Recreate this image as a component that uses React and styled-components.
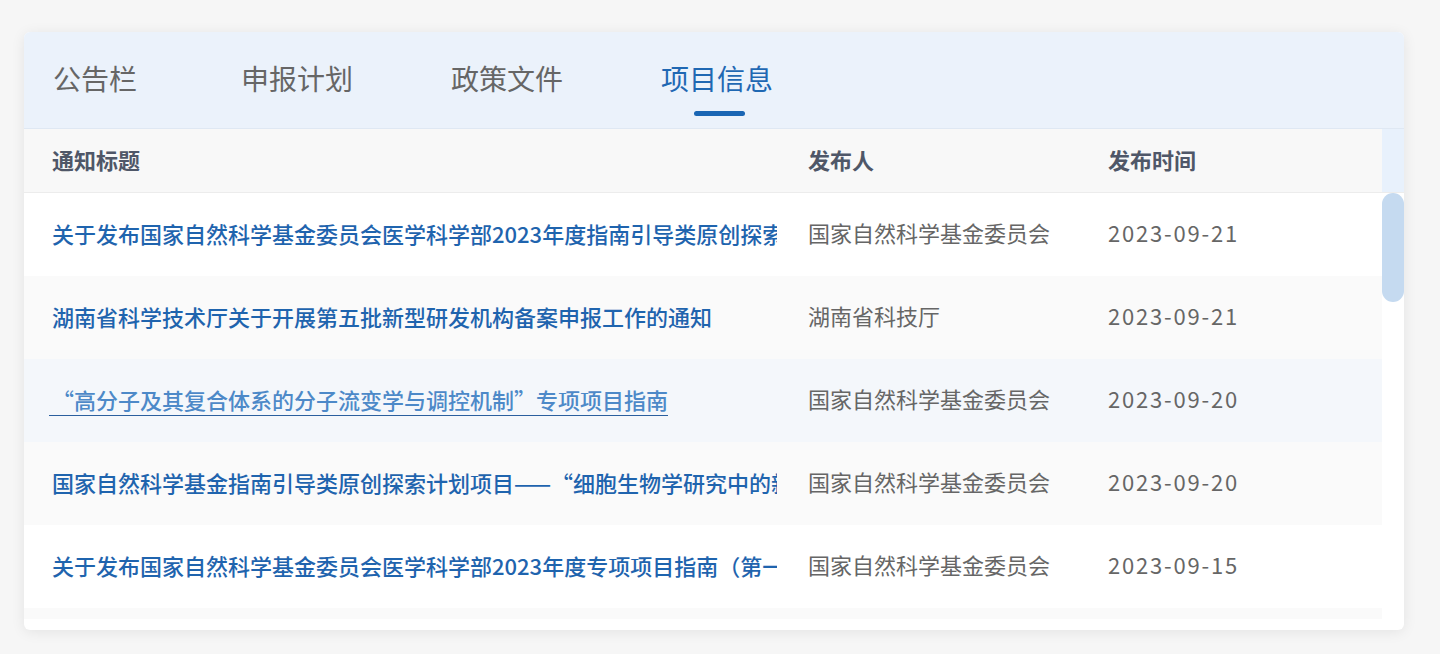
import React from "react";
import styled, { createGlobalStyle, css } from "styled-components";

const Global = createGlobalStyle`
  html, body { margin: 0; padding: 0; }
  body {
    background: #f6f6f6;
    font-family: "Noto Sans CJK SC", "Noto Sans", sans-serif;
  }
  * { box-sizing: border-box; }
`;

const Page = styled.div`
  padding: 32px 36px 24px 24px;
`;

const Card = styled.section`
  width: 1380px;
  background: #ffffff;
  border-radius: 6px;
  overflow: hidden;
  box-shadow: 0 2px 14px rgba(0, 0, 0, 0.08);
  padding-bottom: 11px;
`;

const TabBar = styled.nav`
  height: 97px;
  background: #ebf2fb;
  border-bottom: 1px solid #dfe8f3;
  display: flex;
  align-items: flex-start;
  gap: 98px;
  padding-left: 29px;
`;

const Tab = styled.div`
  display: flex;
  flex-direction: column;
  align-items: center;
  padding-top: 26px;
  font-size: 28px;
  line-height: 40px;
  color: ${(p) => (p.$active ? "#1f68b3" : "#666666")};
  cursor: pointer;
  &:first-child { margin-right: 6px; }
`;

const TabLine = styled.span`
  margin: 13px 0 0 5px;
  width: 51px;
  height: 5px;
  border-radius: 3px;
  background: ${(p) => (p.$active ? "#1a66b4" : "transparent")};
`;

const HeadRow = styled.div`
  display: grid;
  grid-template-columns: 756px 300px 302px 22px;
  height: 64px;
  background: #f8f8f8;
  border-bottom: 1px solid #ececec;
`;

const HeadCell = styled.div`
  display: flex;
  align-items: center;
  padding: 0 0 3px 28px;
  font-size: 22px;
  font-weight: 600;
  color: #4f5768;
`;

const Gutter = styled.div`
  background: #e8f1fc;
`;

const Body = styled.div`
  height: 426px;
  display: flex;
`;

const Rows = styled.div`
  flex: 1;
  overflow: hidden;
`;

const ScrollTrack = styled.div`
  width: 22px;
  flex: none;
  background: #ffffff;
`;

const Thumb = styled.div`
  height: 109px;
  border-radius: 11px;
  background: #c5daf0;
`;

const Row = styled.div`
  display: grid;
  grid-template-columns: 756px 300px 302px;
  height: 83px;
  background: #ffffff;
  &:nth-child(even) { background: #fafafa; }
  ${(p) =>
    p.$hover &&
    css`
      &, &:nth-child(even) { background: #f4f7fb; }
    `}
`;

const Cell = styled.div`
  display: flex;
  align-items: center;
  padding: 0 0 5px 28px;
  font-size: 22px;
  color: #666666;
  white-space: nowrap;
  overflow: hidden;
  min-width: 0;
  letter-spacing: ${(p) => (p.$date ? "1.8px" : "0")};
`;

const TitleCell = styled(Cell)`
  padding-right: 3px;
`;

const Link = styled.a`
  display: inline-block;
  max-width: 100%;
  overflow: hidden;
  white-space: nowrap;
  font-weight: 500;
  line-height: 32px;
  color: ${(p) => (p.$hover ? "#4d89c8" : "#1f64ae")};
  text-decoration: none;
  border-bottom: 1px solid ${(p) => (p.$hover ? "#2b5f9e" : "transparent")};
  margin-left: ${(p) => (p.$hover ? "-3px" : "0")};
  padding: 2px 0 0 ${(p) => (p.$hover ? "3px" : "0")};
  cursor: pointer;
`;

const tabs = ["公告栏", "申报计划", "政策文件", "项目信息"];

const rows = [
  ["关于发布国家自然科学基金委员会医学科学部2023年度指南引导类原创探索计划项目申请指南的通告", "国家自然科学基金委员会", "2023-09-21"],
  ["湖南省科学技术厅关于开展第五批新型研发机构备案申报工作的通知", "湖南省科技厅", "2023-09-21"],
  ["“高分子及其复合体系的分子流变学与调控机制”专项项目指南", "国家自然科学基金委员会", "2023-09-20", true],
  ["国家自然科学基金指南引导类原创探索计划项目——“细胞生物学研究中的新方法与新技术”项目指南", "国家自然科学基金委员会", "2023-09-20"],
  ["关于发布国家自然科学基金委员会医学科学部2023年度专项项目指南（第一批）的通告", "国家自然科学基金委员会", "2023-09-15"],
  ["湖南省科学技术厅关于组织申报2024年度省重点研发计划项目的通知", "湖南省科技厅", "2023-09-14"],
  ["国家自然科学基金委员会关于2023年度专项项目申请的补充说明", "国家自然科学基金委员会", "2023-09-12"],
  ["关于开展2023年度湖南省科技创新平台绩效评价工作的通知", "湖南省科技厅", "2023-09-11"],
];

export default function App() {
  return (
    <>
      <Global />
      <Page>
        <Card>
          <TabBar>
            {tabs.map((t, i) => (
              <Tab key={t} $active={i === 3}>
                {t}
                <TabLine $active={i === 3} />
              </Tab>
            ))}
          </TabBar>
          <HeadRow>
            <HeadCell>通知标题</HeadCell>
            <HeadCell>发布人</HeadCell>
            <HeadCell>发布时间</HeadCell>
            <Gutter />
          </HeadRow>
          <Body>
            <Rows>
              {rows.map(([title, who, date, hover], i) => (
                <Row key={i} $hover={hover}>
                  <TitleCell>
                    <Link $hover={hover}>{title}</Link>
                  </TitleCell>
                  <Cell>{who}</Cell>
                  <Cell $date>{date}</Cell>
                </Row>
              ))}
            </Rows>
            <ScrollTrack>
              <Thumb />
            </ScrollTrack>
          </Body>
        </Card>
      </Page>
    </>
  );
}
